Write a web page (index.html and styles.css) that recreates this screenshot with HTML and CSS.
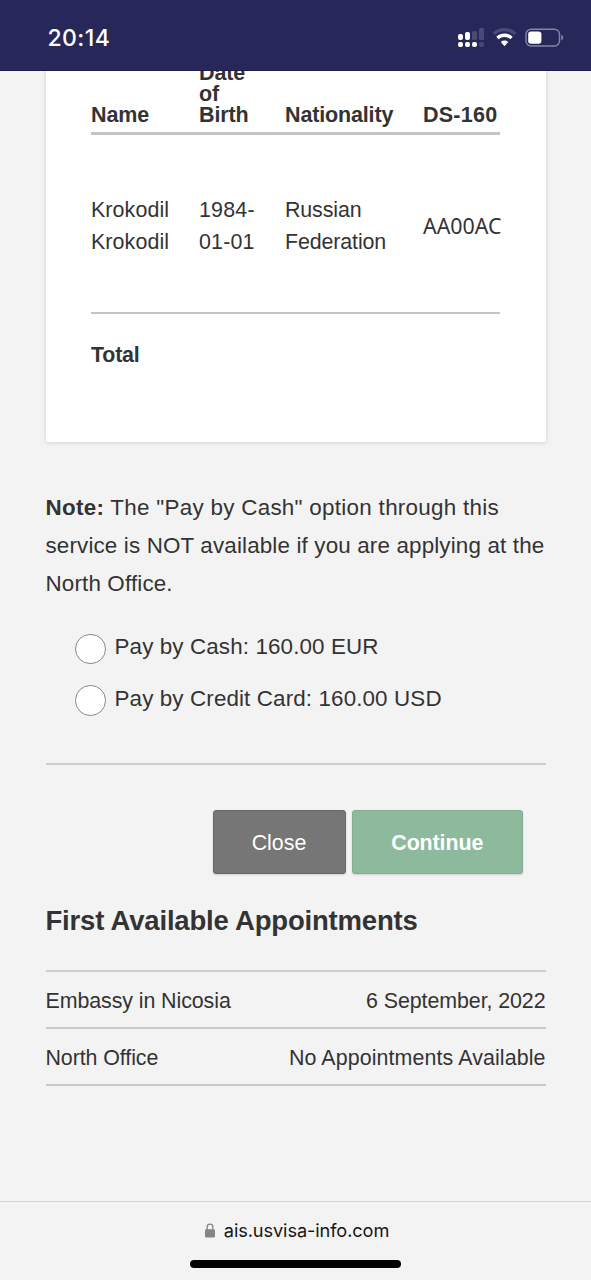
FILE: index.html
```html
<!DOCTYPE html>
<html lang="en">
<head>
<meta charset="utf-8">
<title>Payment Options</title>
<link rel="stylesheet" href="styles.css">
</head>
<body>
<div class="screen">
  <header class="status">
    <span class="clock">20:14</span>
    <svg class="signals" width="110" height="26" viewBox="0 0 110 26">
      <g fill="#fff">
        <rect x="1" y="10" width="5" height="6" rx="2"/>
        <rect x="8" y="8" width="5" height="8" rx="2"/>
        <rect x="1" y="18" width="5" height="5" rx="2"/>
        <rect x="8" y="18" width="5" height="5" rx="2"/>
        <rect x="15" y="18" width="5" height="5" rx="2"/>
      </g>
      <g fill="#4a4a78">
        <rect x="15" y="7" width="5" height="9" rx="1.5"/>
        <rect x="22" y="4" width="5" height="12" rx="1.5"/>
        <rect x="22" y="18" width="5" height="5" rx="2"/>
      </g>
      <path d="M36.700 9.800a16 16 0 0 1 21.600 0" fill="none" stroke="#4a4a78" stroke-width="3.400"/>
      <path d="M40.400 14a10.600 10.600 0 0 1 14.200 0" fill="none" stroke="#fff" stroke-width="3.300"/>
      <path d="M43.800 18a5.400 5.400 0 0 1 7.400 0l-3.700 4.200z" fill="#fff"/>
      <rect x="69" y="5.200" width="33.500" height="16.800" rx="5" fill="none" stroke="#8585a5" stroke-width="1.400"/>
      <rect x="71.200" y="7.400" width="13.200" height="12.400" rx="2.800" fill="#fff"/>
      <path d="M104.300 10.800q2 .8 2 2.800t-2 2.800z" fill="#8585a5"/>
    </svg>
  </header>
  <main class="page">
    <section class="card">
      <div class="row head">
        <span>Name</span><span>Date<br>of<br>Birth</span><span>Nationality</span><span class="ds">DS-160</span>
      </div>
      <div class="row applicant">
        <span class="name">Krokodil<br>Krokodil</span><span class="dob">1984-<br>01-01</span><span class="nationality">Russian<br>Federation</span><span class="code">AA00AC</span>
      </div>
      <div class="total">Total</div>
    </section>
    <p class="note"><span class="lead"><b>Note:</b> The "Pay by Cash" option through this</span><br>service is NOT available if you are applying at the<br>North Office.</p>
    <div class="options">
      <label class="option"><span class="radio"></span><span>Pay by Cash: 160.00 EUR</span></label>
      <label class="option"><span class="radio"></span><span>Pay by Credit Card: 160.00 USD</span></label>
    </div>
    <div class="actions"><div class="button close">Close</div><div class="button continue">Continue</div></div>
    <h2 class="title">First Available Appointments</h2>
    <div class="slots">
      <div class="slot"><span>Embassy in Nicosia</span><span>6 September, 2022</span></div>
      <div class="slot"><span>North Office</span><span class="none">No Appointments Available</span></div>
    </div>
  </main>
  <footer class="address">
    <div class="url">
      <svg class="lock" width="10" height="15" viewBox="0 0 10 15"><path d="M2.200 7V4a2.800 2.800 0 0 1 5.600 0v3" fill="none" stroke="#858585" stroke-width="1.300"/><rect y="6.300" width="10" height="8.200" rx="1.300" fill="#858585"/></svg>
      <span>ais.usvisa-info.com</span>
    </div>
    <div class="home"></div>
  </footer>
</div>
</body>
</html>
```
FILE: styles.css
```css
* { box-sizing: border-box; }
body { margin: 0; background: #f3f3f3; color: #333; font: 22px "Liberation Sans", Arial, sans-serif; }
.screen { width: 591px; height: 1280px; display: flex; flex-direction: column; overflow: hidden; }
.status { height: 71px; flex: none; background: #272859; display: flex; align-items: flex-start; justify-content: space-between; padding: 24px 24.5px 0 47.5px; border-bottom: 1px solid #1d1d4c; }
.clock { color: #fff; font: 500 23px/28px Inter, sans-serif; letter-spacing: 0.4px; }
.signals { display: block; }
.page { flex: none; height: 1130px; overflow: hidden; padding: 0 45.5px; display: flex; flex-direction: column; }
.card { flex: none; height: 391px; margin-top: -20px; padding: 11px 45.5px 0; background: #fff; border-radius: 3px; box-shadow: 0 1px 4px rgba(0,0,0,.13); }
.row { display: grid; grid-template-columns: 108px 86px 138px 77px; white-space: nowrap; }
.head { height: 73px; align-items: end; padding-bottom: 6px; border-bottom: 3px solid #c4c4c4; font-weight: bold; font-size: 21.5px; line-height: 21px; letter-spacing: -0.15px; }
.ds { letter-spacing: 0.25px; }
.applicant { height: 179px; align-items: center; padding-top: 4px; border-bottom: 2px solid #c4c4c4; font-size: 21.4px; line-height: 32px; }
.name { letter-spacing: 0.1px; }
.dob { letter-spacing: 0.2px; }
.nationality { letter-spacing: -0.12px; }
.code { font: 21.4px/32px "Noto Sans", sans-serif; }
.total { margin-top: 25px; font-size: 21.4px; line-height: 32px; font-weight: bold; letter-spacing: -0.2px; }
.note { margin: 47px 0 0; font-size: 22.4px; line-height: 38px; letter-spacing: 0.15px; white-space: nowrap; }
.lead { letter-spacing: 0.29px; }
.options { height: 162px; padding: 20px 0 0 29.5px; border-bottom: 2px solid #cdcdcd; display: flex; flex-direction: column; font-size: 22.4px; letter-spacing: 0.12px; }
.option { height: 51.5px; display: flex; gap: 9px; align-items: center; line-height: 48px; }
.option span:last-child { margin-top: -3px; }
.radio { width: 30.5px; height: 30.5px; border: 1.5px solid #888; border-radius: 50%; background: #fff; }
.actions { display: flex; justify-content: flex-end; gap: 6.5px; padding: 45px 23px 0 0; }
.button { height: 64px; padding-top: 2px; border-radius: 3px; color: #fff; display: flex; align-items: center; justify-content: center; font-size: 21.4px; box-shadow: 0 1px 2px rgba(0,0,0,.15); }
.close { width: 133px; background: #767676; border: 1px solid #696969; }
.continue { width: 170.5px; background: #8dba9d; border: 1px solid #84ad92; font-weight: bold; letter-spacing: -0.1px; }
.title { margin: 30px 0 0; font-size: 27.5px; line-height: 34px; letter-spacing: -0.19px; }
.slots { margin-top: 32px; border-top: 2px solid #cdcdcd; }
.slot { height: 57px; display: flex; justify-content: space-between; align-items: center; padding-top: 3px; border-bottom: 2px solid #c8c8c8; font-size: 21.4px; letter-spacing: -0.08px; white-space: nowrap; }
.none { letter-spacing: 0.1px; }
.address { height: 79px; border-top: 1px solid #d5d5d5; display: flex; flex-direction: column; align-items: center; }
.url { display: flex; gap: 9px; align-items: center; margin: 16px 0 0 3px; color: #161616; font: 18.2px/24px Inter, sans-serif; letter-spacing: -0.1px; }
.lock { display: block; }
.home { width: 211px; height: 8px; margin-top: 18px; border-radius: 4px; background: #000; }
```
